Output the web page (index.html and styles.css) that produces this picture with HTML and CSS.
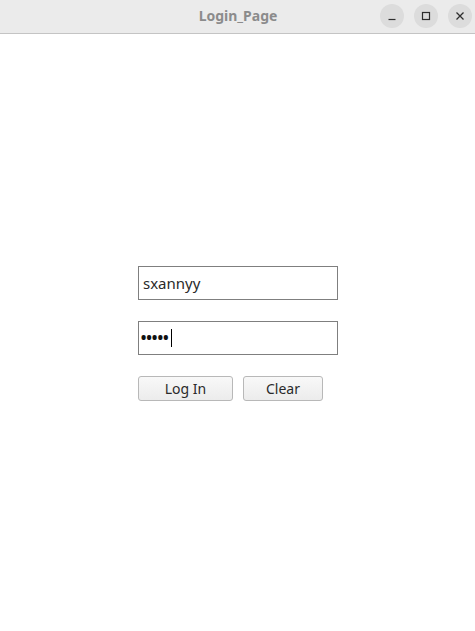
FILE: index.html
```html
<!DOCTYPE html>
<html>
<head>
<meta charset="utf-8">
<link rel="stylesheet" href="styles.css">
</head>
<body>
<div class="window">
  <header class="titlebar">
    <div class="title">Login_Page</div>
    <div class="controls">
      <span class="ctrl"><svg width="12" height="12" viewBox="0 0 12 12"><path d="M2.5 9.5h7" stroke="#2e2e2e" stroke-width="1.2"/></svg></span>
      <span class="ctrl"><svg width="12" height="12" viewBox="0 0 12 12"><rect x="2.5" y="2.5" width="7" height="7" fill="none" stroke="#2e2e2e" stroke-width="1.2"/></svg></span>
      <span class="ctrl"><svg width="12" height="12" viewBox="0 0 12 12"><path d="M2.5 2.5l7 7M9.5 2.5l-7 7" stroke="#2e2e2e" stroke-width="1.3"/></svg></span>
    </div>
  </header>
  <main class="content">
    <form class="login">
      <div class="field">sxannyy</div>
      <div class="field pw"><span class="dots">•••••</span><span class="caret"></span></div>
      <div class="buttons">
        <button type="button" class="btn login-btn">Log In</button>
        <button type="button" class="btn clear-btn">Clear</button>
      </div>
    </form>
  </main>
</div>
</body>
</html>
```
FILE: styles.css
```css
* { box-sizing: border-box; }
html, body { margin: 0; padding: 0; background: #ffffff; }
body { width: 475px; height: 631px; overflow: hidden; font-family: "Noto Sans", "DejaVu Sans", sans-serif; }
.window { display: flex; flex-direction: column; height: 631px; }
.titlebar {
  height: 34px;
  background: #ebebeb;
  border-bottom: 1px solid #c4c4c4;
  display: flex;
  align-items: center;
  justify-content: center;
  position: relative;
}
.title { font-size: 14px; font-weight: 700; color: #8b8b8b; margin-left: 1px; margin-top: -2px; }
.controls {
  position: absolute;
  right: 3px;
  top: 4px;
  display: flex;
  gap: 10px;
}
.ctrl {
  width: 24px; height: 24px; border-radius: 50%;
  background: #dcdcdc;
  display: flex; align-items: center; justify-content: center;
}
.content { flex: 1; padding-top: 232px; padding-left: 138px; }
.login { display: flex; flex-direction: column; }
.field {
  width: 200px; height: 34px;
  border: 1px solid #7f7f7f;
  font-size: 15px;
  color: #2a2a2a;
  padding-left: 4px;
  display: flex; align-items: center;
  margin-bottom: 21px;
  background: #fff;
}
.field.pw { color: #111; padding-left: 1px; }
.dots { font-size: 19px; letter-spacing: -1.6px; line-height: 1; margin-top: 1px; }
.caret { display: inline-block; width: 1px; height: 18px; background: #000; margin-left: 3px; }
.buttons { display: flex; gap: 10px; }
.btn {
  height: 25px;
  border: 1px solid #b8b8b8;
  border-radius: 3px;
  background: linear-gradient(#f8f8f8, #ececec);
  font-family: "Noto Sans", "DejaVu Sans", sans-serif;
  font-size: 14px;
  color: #2a2a2a;
  padding: 0;
  margin: 0;
}
.login-btn { width: 95px; }
.clear-btn { width: 80px; }
```
